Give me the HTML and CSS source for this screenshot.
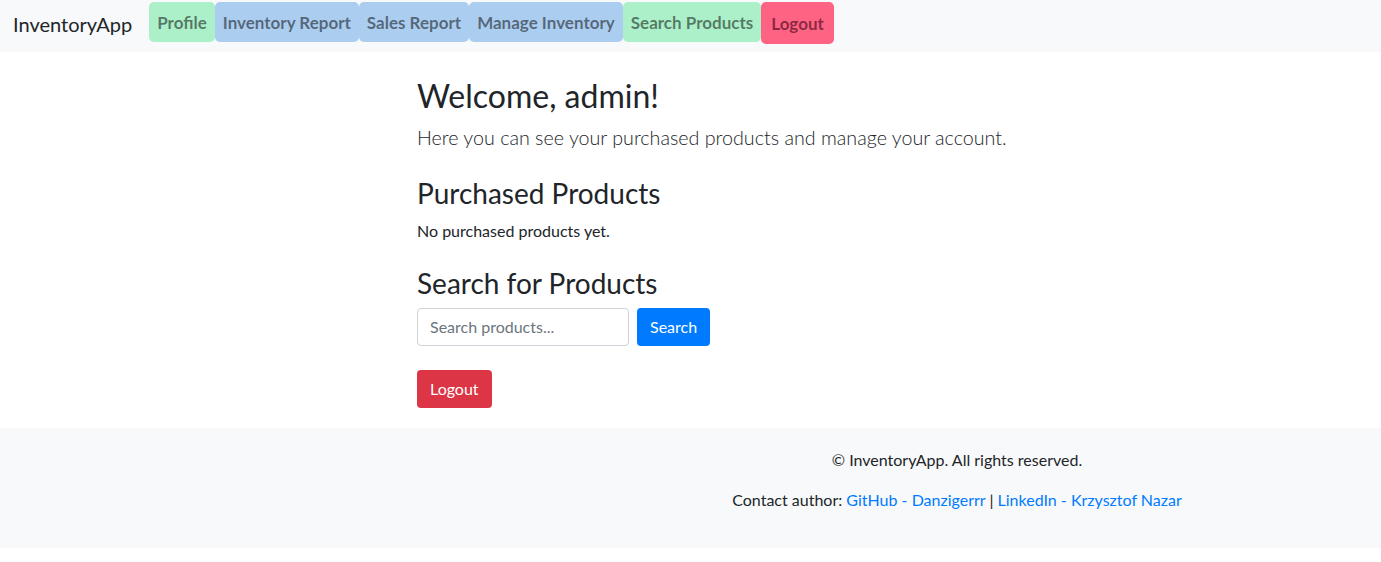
FILE: index.html
```html
<!DOCTYPE html>
<html lang="en">
<head>
<meta charset="utf-8">
<title>InventoryApp</title>
<link rel="stylesheet" href="styles.css">
</head>
<body>
<nav class="navbar">
  <a class="brand" href="#">InventoryApp</a>
  <ul class="nav">
    <li><a class="nav-link green" href="#">Profile</a></li>
    <li><a class="nav-link blue" href="#">Inventory Report</a></li>
    <li><a class="nav-link blue" href="#">Sales Report</a></li>
    <li><a class="nav-link blue" href="#">Manage Inventory</a></li>
    <li><a class="nav-link green" href="#">Search Products</a></li>
    <li><button class="nav-link pink" type="button">Logout</button></li>
  </ul>
</nav>
<main class="main">
  <h2 class="title">Welcome, admin!</h2>
  <p class="lead">Here you can see your purchased products and manage your account.</p>
  <section class="section">
    <h3 class="subtitle">Purchased Products</h3>
    <p class="text">No purchased products yet.</p>
  </section>
  <form class="search">
    <h3 class="subtitle">Search for Products</h3>
    <div class="search-row">
      <input class="input" type="text" placeholder="Search products...">
      <button class="btn btn-primary" type="button">Search</button>
    </div>
  </form>
  <button class="btn btn-danger" type="button">Logout</button>
</main>
<footer class="footer">
  <div class="footer-inner">
    <p class="footer-line">© InventoryApp. All rights reserved.</p>
    <p class="footer-line">Contact author: <a href="#">GitHub - Danzigerrr</a> | <a href="#">LinkedIn - Krzysztof Nazar</a></p>
  </div>
</footer>
</body>
</html>
```

FILE: styles.css
```css
* { box-sizing: border-box; }
html, body { margin: 0; padding: 0; }
body {
  font-family: Lato, "Noto Sans", sans-serif;
  font-size: 16px;
  line-height: 1.5;
  color: #212529;
  background: #fff;
}
a { color: #007bff; text-decoration: none; }

.navbar {
  display: flex;
  align-items: flex-start;
  height: 52px;
  padding: 2px 0 0 13px;
  background: #f8f9fa;
}
.brand {
  color: #212529;
  font-size: 20px;
  line-height: 30px;
  margin-top: 7px;
  margin-right: 17px;
}
.nav {
  display: flex;
  list-style: none;
  margin: 0;
  padding: 0;
}
.nav-link {
  display: block;
  padding: 9px 8px 7px;
  font-family: inherit;
  font-size: 17px;
  font-weight: 700;
  line-height: 24px;
  color: rgba(0, 0, 0, 0.5);
  border-radius: 5px;
  border: 0;
}
.green { background: #abf0c9; }
.blue { background: #abcdf0; }
.pink {
  background: #ff6384;
  color: rgba(60, 0, 20, 0.6);
  border: 1px solid transparent;
  padding: 9px 9px 7px;
  cursor: pointer;
}

.main {
  padding: 25px 0 20px 417px;
}
.title {
  font-size: 32px;
  font-weight: 400;
  line-height: 1.2;
  margin: 0 0 8px;
}
.lead {
  font-size: 19.7px;
  font-weight: 300;
  line-height: 30px;
  margin: 0 0 24px;
}
.subtitle {
  font-size: 28px;
  font-weight: 400;
  line-height: 1.2;
  margin: 0 0 8px;
}
.section { margin-bottom: 24px; }
.text { margin: 0; }
.search { margin: 0 0 24px; }
.search-row { display: flex; gap: 8px; margin-top: -1px; }
.input {
  width: 212px;
  height: 38px;
  padding: 6px 12px;
  font-family: inherit;
  font-size: 16px;
  color: #495057;
  border: 1px solid #ced4da;
  border-radius: 4px;
}
.input::placeholder { color: #6c757d; }
.btn {
  height: 38px;
  padding: 6px 12px;
  font-family: inherit;
  font-size: 16px;
  line-height: 24px;
  color: #fff;
  border: 1px solid transparent;
  border-radius: 4px;
}
.btn-primary { background: #007bff; }
.btn-danger { background: #dc3545; }

.footer {
  background: #f8f9fa;
  padding: 20px 0;
}
.footer-inner {
  padding-left: 533px;
  text-align: center;
}
.footer-line { margin: 0 0 16px; }
```
